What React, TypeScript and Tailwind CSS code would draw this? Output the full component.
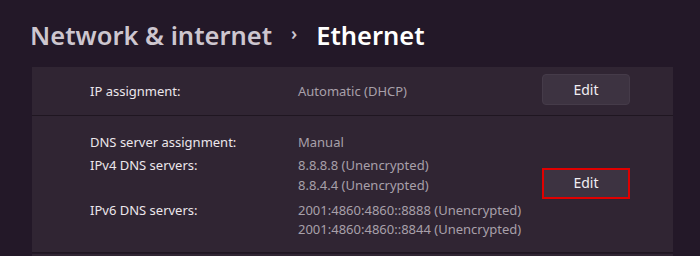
import React from "react";

const font = { fontFamily: "'Noto Sans', 'Open Sans', sans-serif" };

function EditButton({ outlined }: { outlined?: boolean }) {
  return (
    <button
      className={
        "w-[88px] h-[31px] bg-[#3d3341] text-[14px] text-[#f2eef2] " +
        (outlined
          ? "border-2 border-[#e00000]"
          : "rounded-[4px] border border-[#453b49]")
      }
    >
      Edit
    </button>
  );
}

function Row({ label, values, className }: { label: string; values: string[]; className?: string }) {
  return (
    <div className={"flex " + (className ?? "")}>
      <div className="w-[208px] text-[#ece7ec]">{label}</div>
      <div className="flex flex-col text-[#a8a0aa]">
        {values.map((v) => (
          <span key={v}>{v}</span>
        ))}
      </div>
    </div>
  );
}

export default function App() {
  return (
    <div className="w-[700px] h-[256px] overflow-hidden bg-[#231828] text-[13px] leading-[20px]" style={font}>
      {/* Breadcrumb */}
      <div className="h-[67px] flex items-center pl-[30px] pt-[3px] gap-[19px] text-[25.5px] font-semibold">
        <span className="text-[#cdc6cf]">Network &amp; internet</span>
        <span className="text-[#cdc6cf] text-[18px] pb-[4px]">›</span>
        <span className="text-white">Ethernet</span>
      </div>

      <div className="ml-[32px] w-[641px] flex flex-col">
        {/* IP assignment */}
        <div className="h-[49px] bg-[#302533] flex items-center border-b border-[#1f1621]">
          <div className="w-[266px] pl-[58px] text-[#ece7ec]">IP assignment:</div>
          <div className="flex-1 text-[#a8a0aa]">Automatic (DHCP)</div>
          <div className="pr-[43px] pb-[3px]">
            <EditButton />
          </div>
        </div>

        {/* DNS */}
        <div className="h-[137px] bg-[#302533] flex items-center border-b border-[#1f1621] pl-[58px] pr-[43px]">
          <div className="flex-1 flex flex-col pt-[2px]">
            <Row label="DNS server assignment:" values={["Manual"]} />
            <Row
              className="mt-[3px]"
              label="IPv4 DNS servers:"
              values={["8.8.8.8 (Unencrypted)", "8.8.4.4 (Unencrypted)"]}
            />
            <Row
              className="mt-[6px] leading-[19px]"
              label="IPv6 DNS servers:"
              values={[
                "2001:4860:4860::8888 (Unencrypted)",
                "2001:4860:4860::8844 (Unencrypted)",
              ]}
            />
          </div>
          <div className="-mt-[2px]">
            <EditButton outlined />
          </div>
        </div>
        <div className="h-[10px] bg-[#302533] mt-[1px]" />
      </div>
    </div>
  );
}
